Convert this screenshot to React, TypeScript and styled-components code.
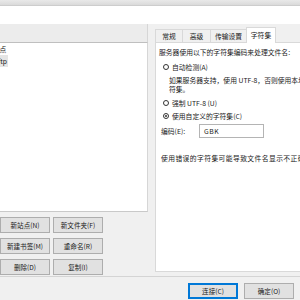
import styled, { createGlobalStyle, css } from 'styled-components';

const GlobalStyle = createGlobalStyle`
  html, body {
    margin: 0;
    padding: 0;
    background: #f0f0f0;
  }
  body {
    font-family: "Noto Sans CJK SC", "Noto Sans", sans-serif;
    font-size: 6.8px;
    color: #1a1a1a;
  }
`;

const Window = styled.div`
  width: 300px;
  height: 300px;
  overflow: hidden;
  display: flex;
  flex-direction: column;
  background: #f0f0f0;
`;

const TopStrip = styled.div`
  height: 5px;
  flex: none;
  background: linear-gradient(#e9e9e9, #dadada);
  border-bottom: 1px solid #cdcdcd;
`;

const WhiteBand = styled.div`
  height: 18px;
  flex: none;
  background: #fff;
`;

const Main = styled.div`
  height: 252px;
  flex: none;
  display: flex;
  border-bottom: 1px solid #d4d4d4;
`;

const LeftCol = styled.div`
  width: 178px;
  margin-left: -30px;
  flex: none;
  display: flex;
  flex-direction: column;
`;

const ListHeader = styled.div`
  height: 18px;
  background: #ececec;
  border-bottom: 1px solid #bfbfbf;
  border-right: 1px solid #d6d6d6;
`;

const TreeList = styled.div`
  height: 166px;
  background: #fff;
  border-right: 1px solid #d6d6d6;
  border-bottom: 1px solid #c9c9c9;
  padding-top: 2px;
  display: flex;
  flex-direction: column;
  gap: 3px;
`;

const TreeItem = styled.div<{ $indent: number; $selected?: boolean }>`
  height: 9px;
  line-height: 9px;
  white-space: nowrap;
  padding-left: ${({ $indent }) => $indent}px;
  ${({ $selected }) =>
    $selected &&
    css`
      & > span {
        background: #e5e5e5;
        padding: 1px 1px 1px 0;
      }
    `}
`;

const ButtonGrid = styled.div`
  margin-top: 5px;
  padding-left: 30px;
  display: grid;
  grid-template-columns: 50px 50px;
  grid-auto-rows: 16px;
  column-gap: 3px;
  row-gap: 5px;
`;

const Btn = styled.button<{ $primary?: boolean; $w?: number }>`
  font: inherit;
  font-size: 6.6px;
  color: #1a1a1a;
  height: 16px;
  width: ${({ $w }) => ($w ? `${$w}px` : 'auto')};
  padding: 0;
  background: #e1e1e1;
  border: 1px solid ${({ $primary }) => ($primary ? '#0078d7' : '#adadad')};
  box-shadow: ${({ $primary }) => ($primary ? 'inset 0 0 0 1px #0078d7' : 'none')};
  border-radius: 0;
  line-height: 14px;
`;

const RightCol = styled.div`
  flex: 1;
  min-width: 0;
  padding: 4px 0 0 7px;
  display: flex;
  flex-direction: column;
`;

const TabStrip = styled.div`
  height: 14px;
  display: flex;
  align-items: flex-end;
  position: relative;
  z-index: 1;
`;

const Tab = styled.div<{ $active?: boolean; $w: number }>`
  width: ${({ $w }) => $w}px;
  box-sizing: border-box;
  text-align: center;
  border: 1px solid #d9d9d9;
  border-bottom: none;
  margin-left: -1px;
  &:first-child { margin-left: 0; }
  height: ${({ $active }) => ($active ? 16 : 13)}px;
  line-height: ${({ $active }) => ($active ? 14 : 12)}px;
  margin-bottom: ${({ $active }) => ($active ? -1 : 0)}px;
  background: ${({ $active }) => ($active ? '#fff' : '#f0f0f0')};
`;

const TabPanel = styled.div`
  height: 230px;
  margin-right: -40px;
  box-sizing: border-box;
  background: #fff;
  border: 1px solid #d9d9d9;
  padding: 5px 0 0 3px;
  display: flex;
  flex-direction: column;
  white-space: nowrap;
  overflow: hidden;
`;

const Line = styled.div<{ $mt?: number; $indent?: number; $spread?: number }>`
  height: 9px;
  line-height: 9px;
  margin-top: ${({ $mt }) => $mt ?? 0}px;
  padding-left: ${({ $indent }) => $indent ?? 0}px;
  letter-spacing: ${({ $spread }) => $spread ?? 0}px;
`;

const RadioRow = styled.div<{ $mt: number }>`
  height: 9px;
  margin-top: ${({ $mt }) => $mt}px;
  display: flex;
  align-items: center;
  gap: 3px;
  padding-left: 4px;
`;

const RadioDot = styled.span<{ $checked?: boolean }>`
  width: 6px;
  height: 6px;
  box-sizing: border-box;
  border-radius: 50%;
  border: 1px solid #333;
  background: #fff;
  display: inline-flex;
  align-items: center;
  justify-content: center;
  &::after {
    content: '';
    width: 2px;
    height: 2px;
    border-radius: 50%;
    background: ${({ $checked }) => ($checked ? '#333' : 'transparent')};
  }
`;

const FieldRow = styled.div`
  margin-top: 4px;
  display: flex;
  align-items: center;
  padding-left: 2px;
`;

const FieldLabel = styled.span`
  width: 38px;
`;

const TextBox = styled.div`
  width: 65px;
  height: 14px;
  box-sizing: border-box;
  border: 1px solid #b4b4b4;
  background: #fff;
  padding-left: 4px;
  line-height: 12px;
  letter-spacing: 0.6px;
`;

const BottomBar = styled.div`
  flex: 1;
  display: flex;
  justify-content: flex-end;
  align-items: flex-start;
  gap: 6px;
  padding: 6px 6px 0 0;
`;

export default function App() {
  return (
    <Window>
      <GlobalStyle />
      <TopStrip />
      <WhiteBand />
      <Main>
        <LeftCol>
          <ListHeader />
          <TreeList>
            <TreeItem $indent={9}>
              <span>我的站点</span>
            </TreeItem>
            <TreeItem $indent={28} $selected>
              <span>ftp</span>
            </TreeItem>
          </TreeList>
          <ButtonGrid>
            <Btn>新站点(N)</Btn>
            <Btn>新文件夹(F)</Btn>
            <Btn>新建书签(M)</Btn>
            <Btn>重命名(R)</Btn>
            <Btn>删除(D)</Btn>
            <Btn>复制(I)</Btn>
          </ButtonGrid>
        </LeftCol>
        <RightCol>
          <TabStrip>
            <Tab $w={28}>常规</Tab>
            <Tab $w={29}>高级</Tab>
            <Tab $w={37}>传输设置</Tab>
            <Tab $w={30} $active>字符集</Tab>
          </TabStrip>
          <TabPanel>
            <Line>服务器使用以下的字符集编码来处理文件名:</Line>
            <RadioRow $mt={5}>
              <RadioDot />
              <span>自动检测(A)</span>
            </RadioRow>
            <Line $mt={5} $indent={10}>如果服务器支持，使用 UTF-8，否则使用本地字</Line>
            <Line $indent={10}>符集。</Line>
            <RadioRow $mt={4}>
              <RadioDot />
              <span>强制 UTF-8 (U)</span>
            </RadioRow>
            <RadioRow $mt={4}>
              <RadioDot $checked />
              <span>使用自定义的字符集(C)</span>
            </RadioRow>
            <FieldRow>
              <FieldLabel>编码(E):</FieldLabel>
              <TextBox>GBK</TextBox>
            </FieldRow>
            <Line $mt={16} $indent={2} $spread={0.4}>使用错误的字符集可能导致文件名显示不正确。</Line>
          </TabPanel>
        </RightCol>
      </Main>
      <BottomBar>
        <Btn $primary $w={50}>连接(C)</Btn>
        <Btn $w={50}>确定(O)</Btn>
      </BottomBar>
    </Window>
  );
}
